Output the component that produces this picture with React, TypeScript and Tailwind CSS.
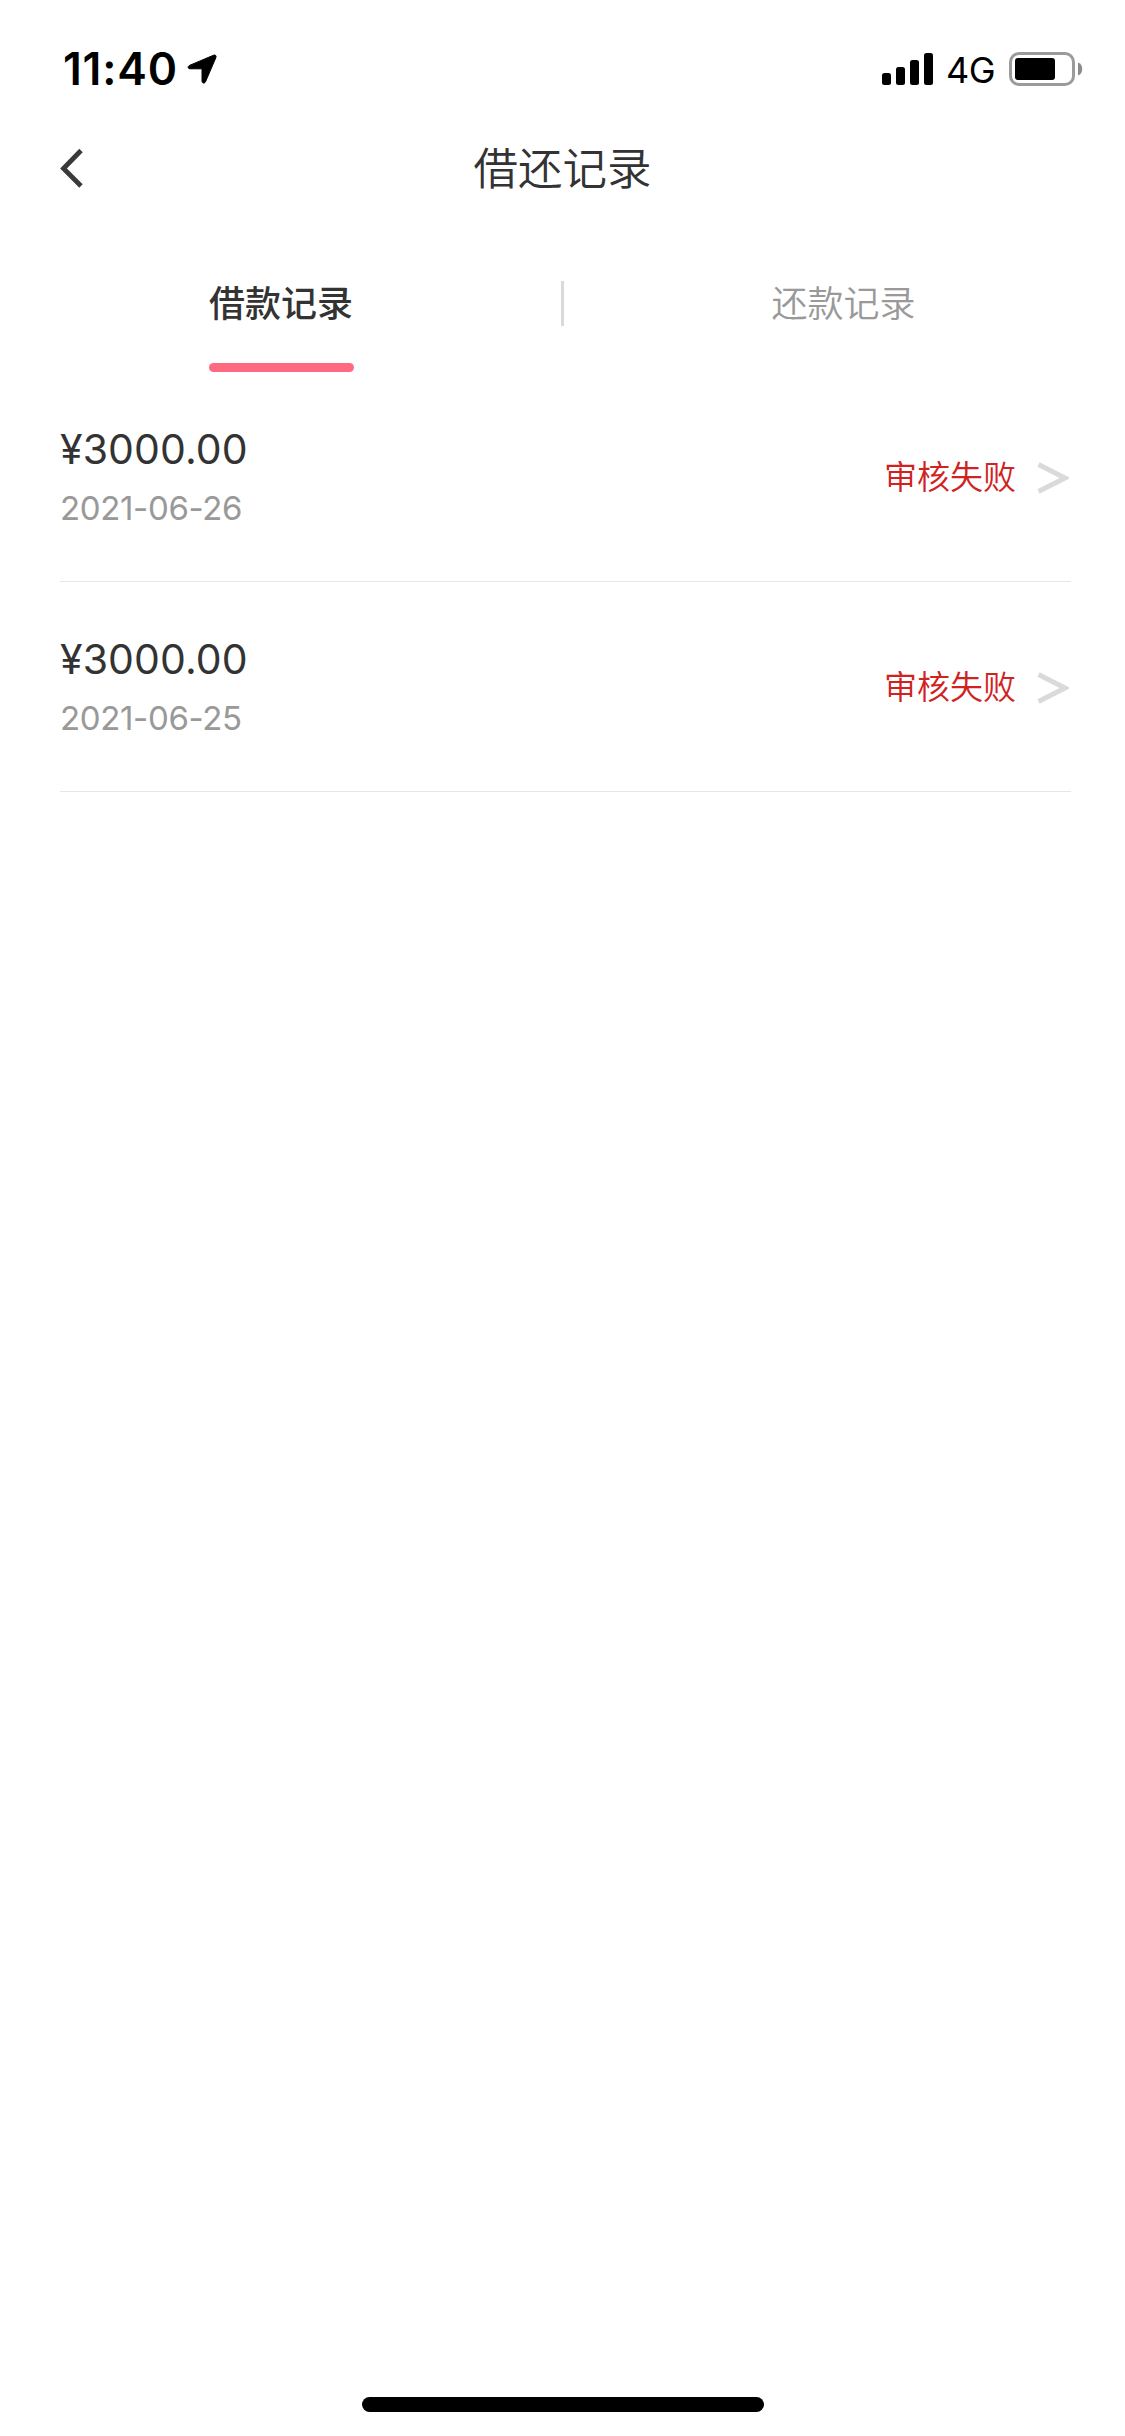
const records = [
  { id: 1, amount: '¥3000.00', date: '2021-06-26', status: '审核失败' },
  { id: 2, amount: '¥3000.00', date: '2021-06-25', status: '审核失败' },
];

function StatusBar() {
  return (
    <div className="h-[138px] flex items-start justify-between pl-[63px] pr-[42px] pt-[42px] text-black">
      <div className="flex items-center h-[54px]">
        <span className="w-[124px] text-[44.5px] leading-[54px] font-semibold tracking-[0.8px] whitespace-nowrap">11:40</span>
        <svg width="30" height="30" viewBox="0 0 30 30">
          <path
            d="M26.6 1.2 2.5 11.4C0.5 12.4 0.8 14.7 3 14.8H14.2Q15 14.8 15 15.6V27C15 29.4 17.6 29.8 18.5 27.8L28.9 3.6C29.6 1.8 28.4.5 26.6 1.2Z"
            fill="currentColor"
            stroke="currentColor"
            strokeWidth="1"
            strokeLinejoin="round"
          />
        </svg>
      </div>

      <div className="flex items-center h-[54px]">
        <svg width="51" height="32" viewBox="0 0 51 32" fill="currentColor">
          <rect x="0" y="20" width="9" height="12" rx="2.5" />
          <rect x="14" y="14" width="9" height="18" rx="2.5" />
          <rect x="28" y="7" width="9" height="25" rx="2.5" />
          <rect x="42" y="0" width="9" height="32" rx="2.5" />
        </svg>
        <span className="w-[63px] ml-[13px] text-[36px] leading-[54px] font-normal tracking-[-0.6px] pt-px">4G</span>
        <svg width="74" height="34" viewBox="0 0 74 34">
          <rect x="1.5" y="1.5" width="63" height="31" rx="8.5" fill="none" stroke="#9b9b9b" strokeWidth="3" />
          <rect x="6" y="6" width="40" height="22" rx="3" fill="currentColor" />
          <path d="M69 10.5C72 11.5 73.2 14 73.2 17C73.2 20 72 22.5 69 23.5Z" fill="#8b8b8b" />
        </svg>
      </div>
    </div>
  );
}

function RecordRow({ amount, date, status }: { amount: string; date: string; status: string }) {
  return (
    <li className="h-[210px] flex items-center justify-between border-b border-[#e6e6e6]">
      <div className="flex flex-col gap-[14px] pb-[2px]">
        <span className="text-[41px] leading-[50px] tracking-[0.1px] text-[#333]">{amount}</span>
        <span className="text-[33px] leading-[40px] tracking-[-0.35px] text-[#999]">{date}</span>
      </div>
      <div className="flex items-center">
        <span className="text-[33px] leading-[40px] font-[350] text-[#d0221f]">{status}</span>
        <svg className="mt-[3px] ml-[21px] mr-[2px]" width="32" height="32" viewBox="0 0 32 32">
          <path d="M1.5 2.5 28 16 1.5 29.5" fill="none" stroke="#dadada" strokeWidth="4.8" />
        </svg>
      </div>
    </li>
  );
}

export default function App() {
  return (
    <div className="w-[1125px] h-[2436px] flex flex-col bg-white font-['Inter','Noto_Sans_CJK_SC',sans-serif]">
      <StatusBar />

      <header className="h-[60px] px-[60px] grid grid-cols-[1fr_auto_1fr] items-center">
        <button className="w-6" aria-label="返回">
          <svg width="24" height="40" viewBox="0 0 24 40">
            <path d="M21 2.5 3.5 20.5 21 38" fill="none" stroke="#3a3a3a" strokeWidth="4.8" />
          </svg>
        </button>
        <h1 className="pt-[3px] text-[44.5px] leading-[57px] font-[350] text-[#333]">借还记录</h1>
        <span />
      </header>

      {/* Tabs */}
      <nav className="h-[174px] flex items-start pt-[83px] pl-[2px]">
        <button className="flex-1 flex flex-col items-center pt-px text-[36px] leading-[45px] font-medium text-[#333]">
          <span className="pr-px">借款记录</span>
          <span className="mt-[36px] w-[145px] h-[9px] rounded-full bg-[#ff6a80]" />
        </button>
        <span className="w-[3px] h-[45px] bg-[#dadada]" />
        <button className="flex-1 pt-px pr-[2px] text-[36px] leading-[45px] font-[350] text-[#999]">还款记录</button>
      </nav>

      <ul className="pl-[60px] pr-[54px]">
        {records.map((r) => (
          <RecordRow key={r.id} amount={r.amount} date={r.date} status={r.status} />
        ))}
      </ul>

      {/* Home indicator */}
      <div className="mt-auto mb-6 mx-auto w-[402px] h-[15px] rounded-full bg-black" />
    </div>
  );
}
